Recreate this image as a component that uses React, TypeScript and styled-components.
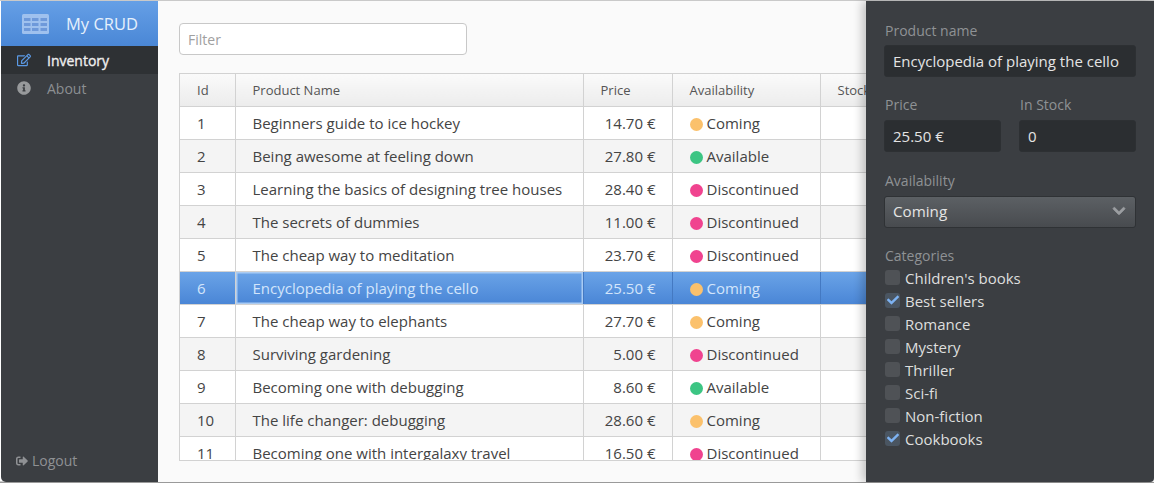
import React from "react";
import styled, { createGlobalStyle } from "styled-components";
import { FaChevronDown, FaInfoCircle, FaRegEdit, FaSignOutAlt, FaCheck } from "react-icons/fa";

type Status = "Coming" | "Available" | "Discontinued";

const products: { id: number; name: string; price: string; status: Status }[] = [
  { id: 1, name: "Beginners guide to ice hockey", price: "14.70 €", status: "Coming" },
  { id: 2, name: "Being awesome at feeling down", price: "27.80 €", status: "Available" },
  { id: 3, name: "Learning the basics of designing tree houses", price: "28.40 €", status: "Discontinued" },
  { id: 4, name: "The secrets of dummies", price: "11.00 €", status: "Discontinued" },
  { id: 5, name: "The cheap way to meditation", price: "23.70 €", status: "Discontinued" },
  { id: 6, name: "Encyclopedia of playing the cello", price: "25.50 €", status: "Coming" },
  { id: 7, name: "The cheap way to elephants", price: "27.70 €", status: "Coming" },
  { id: 8, name: "Surviving gardening", price: "5.00 €", status: "Discontinued" },
  { id: 9, name: "Becoming one with debugging", price: "8.60 €", status: "Available" },
  { id: 10, name: "The life changer: debugging", price: "28.60 €", status: "Coming" },
  { id: 11, name: "Becoming one with intergalaxy travel", price: "16.50 €", status: "Discontinued" }
];

const categories = [
  { name: "Children's books", checked: false },
  { name: "Best sellers", checked: true },
  { name: "Romance", checked: false },
  { name: "Mystery", checked: false },
  { name: "Thriller", checked: false },
  { name: "Sci-fi", checked: false },
  { name: "Non-fiction", checked: false },
  { name: "Cookbooks", checked: true }
];

const statusColors: Record<Status, string> = {
  Coming: "#fbc16c",
  Available: "#3cc583",
  Discontinued: "#f0438f"
};

const GlobalStyle = createGlobalStyle`
  html, body {
    margin: 0;
    padding: 0;
    background: #fff;
  }
  * {
    box-sizing: border-box;
  }
`;

const s = {
  Frame: styled.div`
    position: relative;
    display: flex;
    width: 1154px;
    height: 483px;
    padding: 1px 0 1px 1px;
    overflow: hidden;
    background: linear-gradient(#c9c9c9 1px, #fff 1px, #fff 481px, #9a9a9a 482px);
    font-family: "Open Sans", sans-serif;
    color: #444;
  `,
  Sidebar: styled.aside`
    display: flex;
    flex-direction: column;
    flex: 0 0 157px;
    background: #3b3e42;
    border-radius: 0 0 0 5px;
  `,
  Brand: styled.div`
    display: flex;
    align-items: center;
    height: 45px;
    padding-left: 21px;
    gap: 17px;
    background: linear-gradient(#659fe6, #4a87d6);
    color: #e6f0fc;
    font-size: 16.5px;
  `,
  NavItem: styled.div<{ $active?: boolean }>`
    display: flex;
    align-items: center;
    height: 28px;
    padding-left: 16px;
    gap: 16px;
    font-size: 14px;
    color: ${p => (p.$active ? "#eee" : "#8c8f92")};
    background: ${p => (p.$active ? "#2e3134" : "transparent")};
    ${p => (p.$active ? "-webkit-text-stroke: 0.35px #eee;" : "")}
    svg {
      color: ${p => (p.$active ? "#5b9ae6" : "#97999b")};
      font-size: 14px;
    }
  `,
  Logout: styled.div`
    display: flex;
    align-items: center;
    gap: 4px;
    margin-top: auto;
    padding: 0 0 12px 15px;
    font-size: 14px;
    color: #8f9194;
    svg {
      font-size: 12px;
    }
  `,
  Main: styled.main`
    flex: 1;
    min-width: 0;
    padding: 22px 0 0 21px;
    background: #fafafa;
  `,
  Filter: styled.input`
    display: block;
    width: 288px;
    height: 32px;
    padding: 0 8px;
    border: 1px solid #c8c8c8;
    border-radius: 4px;
    background: #fff;
    font: 14px "Open Sans", sans-serif;
    color: #444;
    &::placeholder {
      color: #a0a0a0;
      opacity: 1;
    }
  `,
  TableWrap: styled.div`
    width: 900px;
    height: 388px;
    margin-top: 18px;
    overflow: hidden;
    border: 1px solid #d2d2d2;
    border-right: 0;
    background: #fff;
  `,
  Table: styled.table`
    width: 900px;
    table-layout: fixed;
    border-collapse: collapse;
  `,
  Th: styled.th<{ $width: number }>`
    width: ${p => p.$width}px;
    height: 32px;
    padding: 0 16px 0 17px;
    text-align: left;
    font-size: 13px;
    font-weight: 400;
    color: #555;
    background: linear-gradient(#fafafa, #ececec);
    border-left: 1px solid #d2d2d2;
    border-bottom: 1px solid #d2d2d2;
    white-space: nowrap;
    overflow: hidden;
    &:first-child {
      border-left: 0;
    }
  `,
  Row: styled.tr<{ $selected: boolean; $odd: boolean }>`
    height: 33px;
    background: ${p =>
      p.$selected
        ? "linear-gradient(#6ba4e8, #4a86d6)"
        : p.$odd
        ? "#fff"
        : "#f4f4f4"};
    color: ${p => (p.$selected ? "#d3e5fb" : "#444")};
  `,
  Td: styled.td<{ $right?: boolean; $focused?: boolean; $selected?: boolean }>`
    padding: 0 16px 0 17px;
    font-size: 15px;
    white-space: nowrap;
    text-align: ${p => (p.$right ? "right" : "left")};
    border-left: 1px solid ${p => (p.$selected ? "#4479c2" : "#d2d2d2")};
    border-bottom: 1px solid #d2d2d2;
    ${p => (p.$focused ? "box-shadow: inset 0 0 0 1.5px #a9cbf3;" : "")}
    &:first-child {
      border-left: 0;
    }
  `,
  Dot: styled.span<{ $status: Status }>`
    display: inline-block;
    width: 13px;
    height: 13px;
    margin-right: 4px;
    vertical-align: -2px;
    border-radius: 50%;
    background: ${p => statusColors[p.$status]};
  `,
  Panel: styled.aside`
    position: absolute;
    top: 1px;
    right: 0;
    bottom: 1px;
    width: 288px;
    display: flex;
    flex-direction: column;
    padding: 21px 18px 0;
    background: #3b3e42;
    border-radius: 0 0 4px 0;
    box-shadow: -4px 0 10px rgba(0, 0, 0, 0.22);
  `,
  Label: styled.label<{ $height?: number }>`
    display: block;
    height: ${p => p.$height ?? 24}px;
    padding-left: 1px;
    font-size: 14px;
    line-height: 18px;
    color: #8f9295;
  `,
  Field: styled.div`
    margin-bottom: 19.4px;
  `,
  FieldRow: styled.div`
    display: flex;
    gap: 18px;
    > * {
      flex: 1;
      min-width: 0;
    }
  `,
  Input: styled.div`
    display: flex;
    align-items: center;
    height: 32px;
    padding: 0 8px;
    border: 1px solid #2d3033;
    border-radius: 3px;
    background: #2b2e31;
    font-size: 15px;
    color: #e4e4e4;
    white-space: nowrap;
  `,
  Select: styled.div`
    display: flex;
    align-items: center;
    justify-content: space-between;
    height: 32px;
    padding: 0 9px 2px 8px;
    border: 1px solid #2f3235;
    border-radius: 3px;
    background: linear-gradient(#5c6064, #484b4f);
    font-size: 15.2px;
    color: #e4e4e4;
    svg {
      font-size: 14px;
      color: #9b9ea1;
      stroke: currentColor;
      stroke-width: 30px;
    }
  `,
  CheckRow: styled.div`
    display: flex;
    align-items: center;
    height: 23px;
    gap: 5px;
    padding-left: 1px;
    font-size: 15px;
    color: #dedede;
  `,
  CheckBox: styled.span<{ $checked: boolean }>`
    display: flex;
    align-items: center;
    justify-content: center;
    width: 15px;
    height: 15px;
    margin-top: -1px;
    border-radius: 3px;
    background: ${p => (p.$checked ? "#4a5561" : "#4f5256")};
    color: #7db2f2;
    font-size: 12px;
  `
};

const TableIcon: React.FC = () => (
  <svg width="27" height="20" viewBox="0 0 27 20">
    <rect width="27" height="20" rx="1.5" fill="#9fc1ee" />
    <g fill="#6e99da">
      {[4, 9, 14].map(y =>
        [2, 10, 18.5].map(x => <rect key={`${x}-${y}`} x={x} y={y} width="6.5" height="3" />)
      )}
    </g>
  </svg>
);

const columns = [
  { title: "Id", width: 55 },
  { title: "Product Name", width: 348 },
  { title: "Price", width: 89 },
  { title: "Availability", width: 148 },
  { title: "Stock", width: 260 }
];

const App: React.FC = () => {
  return (
    <s.Frame>
      <GlobalStyle />
      <s.Sidebar>
        <s.Brand>
          <TableIcon />
          My CRUD
        </s.Brand>
        <s.NavItem $active>
          <FaRegEdit />
          Inventory
        </s.NavItem>
        <s.NavItem>
          <FaInfoCircle />
          About
        </s.NavItem>
        <s.Logout>
          <FaSignOutAlt />
          Logout
        </s.Logout>
      </s.Sidebar>
      <s.Main>
        <s.Filter placeholder="Filter" readOnly />
        <s.TableWrap>
          <s.Table>
            <thead>
              <tr>
                {columns.map(c => (
                  <s.Th key={c.title} $width={c.width}>
                    {c.title}
                  </s.Th>
                ))}
              </tr>
            </thead>
            <tbody>
              {products.map(item => {
                const selected = item.id === 6;
                return (
                  <s.Row key={item.id} $selected={selected} $odd={item.id % 2 === 1}>
                    <s.Td>{item.id}</s.Td>
                    <s.Td $focused={selected}>{item.name}</s.Td>
                    <s.Td $right $selected={selected}>
                      {item.price}
                    </s.Td>
                    <s.Td $selected={selected}>
                      <s.Dot $status={item.status} />
                      {item.status}
                    </s.Td>
                    <s.Td $selected={selected} />
                  </s.Row>
                );
              })}
            </tbody>
          </s.Table>
        </s.TableWrap>
      </s.Main>
      <s.Panel>
        <s.Field>
          <s.Label $height={23}>Product name</s.Label>
          <s.Input>Encyclopedia of playing the cello</s.Input>
        </s.Field>
        <s.FieldRow>
          <s.Field>
            <s.Label>Price</s.Label>
            <s.Input>25.50 €</s.Input>
          </s.Field>
          <s.Field>
            <s.Label>In Stock</s.Label>
            <s.Input>0</s.Input>
          </s.Field>
        </s.FieldRow>
        <s.Field>
          <s.Label>Availability</s.Label>
          <s.Select>
            Coming
            <FaChevronDown />
          </s.Select>
        </s.Field>
        <div>
          <s.Label $height={19}>Categories</s.Label>
          {categories.map(c => (
            <s.CheckRow key={c.name}>
              <s.CheckBox $checked={c.checked}>{c.checked && <FaCheck />}</s.CheckBox>
              {c.name}
            </s.CheckRow>
          ))}
        </div>
      </s.Panel>
    </s.Frame>
  );
};

export default App;
